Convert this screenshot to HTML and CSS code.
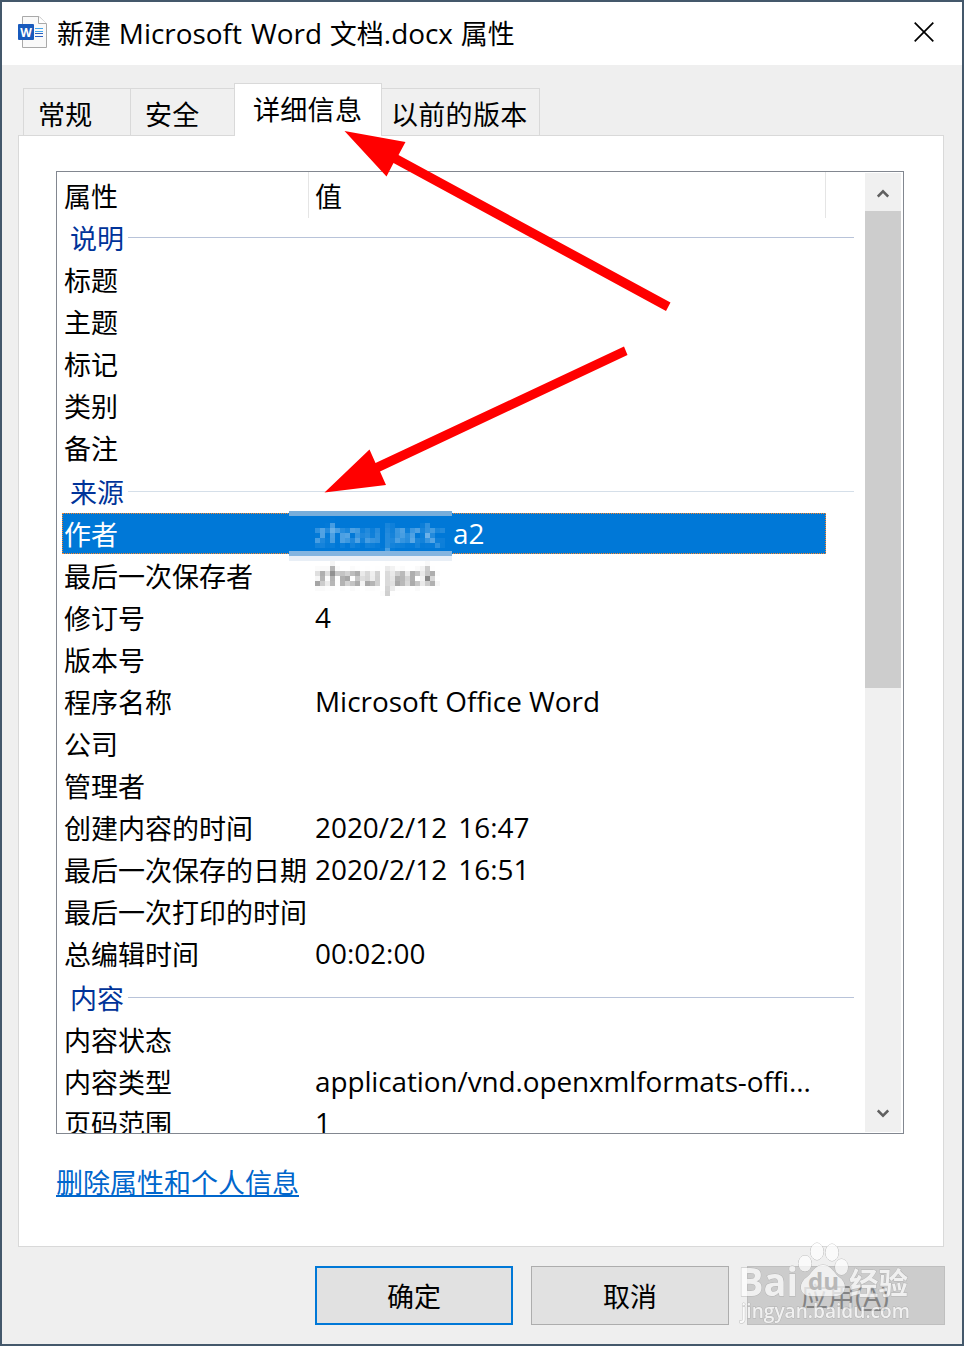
FILE: index.html
```html
<!DOCTYPE html>
<html lang="zh-CN">

<head>
  <meta charset="UTF-8">
  <meta name="viewport" content="width=device-width, initial-scale=1.0">
  <title>新建 Microsoft Word 文档.docx 属性</title>
  <link rel="stylesheet" href="styles.css">
</head>

<body>
  <div class="window">
    <header class="titlebar">
      <svg class="word-icon" width="30" height="34" viewBox="0 0 30 34">
        <path d="M4.5 .5H21L28.500 8V31.500H4.500Z" fill="#f9f9f9" stroke="#a9a9a9" />
        <path d="M20.500 .5V7.500H28.500" fill="#fff" stroke="#a9a9a9" />
        <path d="M17 12.500h8M17 15.500h8" stroke="#41a5ee" />
        <path d="M17 17.500h8M17 20.500h8" stroke="#2b5fc0" />
        <rect y="8" width="16" height="16" rx="1" fill="#185abd" />
        <text x="8" y="20.500" class="word-letter">W</text>
      </svg>
      <h1>新建 <span class="en">Microsoft Word</span> 文档<span class="en">.docx</span> 属性</h1>
      <svg class="close" width="20" height="20" viewBox="0 0 20 20">
        <path d="M.7 .7L19.300 19.300M19.300 .7L.7 19.300" stroke="#000" stroke-width="1.700" />
      </svg>
    </header>

    <nav class="tabs">
      <div class="tab general">常规</div>
      <div class="tab security">安全</div>
      <div class="tab active">详细信息</div>
      <div class="tab versions">以前的版本</div>
    </nav>

    <main class="panel">
      <div class="list">
        <div class="rows">
          <div class="row head"><span class="name">属性</span><span class="value">值</span></div>
          <div class="group">说明</div>
          <div class="row"><span class="name">标题</span></div>
          <div class="row"><span class="name">主题</span></div>
          <div class="row"><span class="name">标记</span></div>
          <div class="row"><span class="name">类别</span></div>
          <div class="row"><span class="name">备注</span></div>
          <div class="group light">来源</div>
          <div class="row selected"><span class="name">作者</span><span class="value en"><span class="mosaic">zhou jack;</span><span class="suffix">a2</span></span></div>
          <div class="row"><span class="name">最后一次保存者</span><span class="value en"><span class="mosaic">zhou jack</span></span></div>
          <div class="row"><span class="name">修订号</span><span class="value en">4</span></div>
          <div class="row"><span class="name">版本号</span></div>
          <div class="row"><span class="name">程序名称</span><span class="value en">Microsoft Office Word</span></div>
          <div class="row"><span class="name">公司</span></div>
          <div class="row"><span class="name">管理者</span></div>
          <div class="row"><span class="name">创建内容的时间</span><span class="value en date">2020/2/12 16:47</span></div>
          <div class="row"><span class="name">最后一次保存的日期</span><span class="value en date">2020/2/12 16:51</span></div>
          <div class="row"><span class="name">最后一次打印的时间</span></div>
          <div class="row"><span class="name">总编辑时间</span><span class="value en">00:02:00</span></div>
          <div class="group">内容</div>
          <div class="row"><span class="name">内容状态</span></div>
          <div class="row"><span class="name">内容类型</span><span class="value en type">application/vnd.openxmlformats-offi...</span></div>
          <div class="row last"><span class="name">页码范围</span><span class="value en">1</span></div>
        </div>
        <div class="scrollbar">
          <svg class="arrow" width="12" height="10" viewBox="0 0 12 10"><path d="M.8 7.500L6 2.300L11.200 7.500" /></svg>
          <div class="thumb"></div>
          <svg class="arrow down" width="12" height="10" viewBox="0 0 12 10"><path d="M.8 2.500L6 7.700L11.200 2.500" /></svg>
        </div>
      </div>
      <a class="remove" href="#">删除属性和个人信息</a>
    </main>

    <footer class="buttons">
      <button class="default">确定</button>
      <button>取消</button>
      <button disabled>应用<span class="en">(<u>A</u>)</span></button>
    </footer>

    <!-- annotation arrows -->
    <svg class="arrows" width="964" height="1346" viewBox="0 0 964 1346">
      <path d="M344.500 131L405.500 142L398.500 155L670.500 302.500L666 311L393.500 163L386.500 176.500Z" />
      <path d="M324.500 492.500L369.500 449.500L375.500 463L624 346.500L627.500 355L380 471.500L386 485Z" />
    </svg>

    <!-- watermark -->
    <svg class="watermark" width="180" height="90" viewBox="736 1238 180 90">
      <g class="mark">
        <text x="738" y="1296" textLength="60" lengthAdjust="spacingAndGlyphs" class="brand">Bai</text>
        <ellipse cx="805" cy="1263.500" rx="6.500" ry="8" />
        <ellipse cx="817" cy="1251.500" rx="6.500" ry="8.500" />
        <ellipse cx="832" cy="1252.500" rx="6.500" ry="8.500" />
        <ellipse cx="841.500" cy="1267" rx="6.500" ry="8" />
        <path d="M823 1265C831 1265 834 1273 839 1277C849 1284 845 1296 836 1296H811C800 1296 797 1284 807 1277C812 1273 815 1265 823 1265Z" />
        <text x="849" y="1294" textLength="59" lengthAdjust="spacingAndGlyphs" class="brand-cn">经验</text>
        <text x="741" y="1318" textLength="169" lengthAdjust="spacingAndGlyphs" class="site">jingyan.baidu.com</text>
      </g>
      <text x="808" y="1290" textLength="31" lengthAdjust="spacingAndGlyphs" class="du">du</text>
    </svg>

    <!-- pixelates the hidden names -->
    <svg class="defs" width="0" height="0">
      <filter id="pixelate" filterUnits="userSpaceOnUse" x="-5" y="0" width="145" height="45" color-interpolation-filters="sRGB">
        <feGaussianBlur stdDeviation="1.800" result="soft" />
        <feFlood x="2" y="2" width="1" height="1" flood-color="#000" />
        <feComposite x="0" y="0" width="5" height="5" operator="over" in2="none" />
        <feTile result="grid" />
        <feComposite in="soft" in2="grid" operator="in" />
        <feMorphology operator="dilate" radius="2" />
      </filter>
    </svg>
  </div>
</body>

</html>
```

FILE: styles.css
```css
* {
  box-sizing: border-box;
}

body {
  margin: 0;
  font-family: "Noto Sans CJK SC", sans-serif;
  font-size: 27px;
  line-height: 42px;
  color: #000;
}

.en {
  font-family: "Open Sans", "Noto Sans", sans-serif;
  font-size: 27.9px;
}

.window {
  position: relative;
  width: 964px;
  height: 1346px;
  border: 2px solid #44586b;
  background: #efefef;
  overflow: hidden;
}

.titlebar {
  display: flex;
  align-items: center;
  height: 63px;
  padding: 0 28px 0 16px;
  background: #fff;
}

.word-icon {
  flex: none;
  margin-bottom: 2px;
}

.word-letter {
  font: bold 12px "Open Sans", sans-serif;
  fill: #fff;
  text-anchor: middle;
}

h1 {
  margin: 0 auto 1px 9px;
  font-size: 27px;
  font-weight: normal;
  word-spacing: 1.8px;
  white-space: nowrap;
}

.close {
  margin-bottom: 3px;
}

/* tabs */
.tabs {
  display: flex;
  align-items: flex-end;
  height: 71px;
  padding-left: 21px;
}

.tab {
  height: 48px;
  padding: 4px 0 0 14px;
  border: 1px solid #d9d9d9;
  border-right: 0;
  background: #f0f0f0;
  letter-spacing: .3px;
  white-space: nowrap;
}

.general {
  width: 107px;
}

.security {
  width: 104px;
}

.tab.active {
  width: 148px;
  height: 53px;
  padding: 4px 0 0 18px;
  border-right: 1px solid #d9d9d9;
  border-bottom: 0;
  background: #fff;
  z-index: 1;
}

.versions {
  width: 158px;
  padding-left: 9px;
  border-left: 0;
  border-right: 1px solid #d9d9d9;
}

.panel {
  width: 926px;
  height: 1112px;
  margin: -1px 0 0 16px;
  padding: 35px 0 0 37px;
  border: 1px solid #d9d9d9;
  background: #fff;
}

/* property list */
.list {
  display: flex;
  justify-content: space-between;
  width: 848px;
  height: 963px;
  padding-right: 2px;
  border: 1px solid #828790;
  overflow: hidden;
}

.rows {
  width: 798px;
}

.row {
  display: flex;
  height: 42px;
  padding-left: 7px;
  line-height: 40px;
  white-space: nowrap;
}

.name {
  flex: none;
  width: 251px;
}

.value.en {
  line-height: 38px;
}

.date {
  word-spacing: 4px;
}

.type {
  letter-spacing: -.08px;
}

.head {
  width: 769px;
  height: 46px;
  margin-bottom: -2px;
  border-right: 1px solid #e5e5e5;
}

.head span {
  padding-top: 4px;
}

.head .name {
  width: 245px;
  border-right: 1px solid #e5e5e5;
}

.head .value {
  padding-left: 6px;
}

.last {
  margin-top: -1px;
}

.group {
  display: flex;
  align-items: center;
  height: 44px;
  padding: 0 0 0 13px;
  color: #003399;
}

.group::after {
  content: "";
  flex: 1;
  height: 1px;
  margin: 0 1px 2px 4px;
  background: #b8c3d9;
}

.group.light::after {
  background: #d5dfe9;
}

.selected {
  position: relative;
  width: 764px;
  height: 41px;
  margin: -1px 0 2px 5px;
  padding-left: 2px;
  outline: 1px dotted #ff8728;
  outline-offset: -1px;
  background: #0078d7;
  color: #fff;
  line-height: 42px;
}

/* smeared edges of the mosaic */
.selected::before,
.selected::after {
  content: "";
  position: absolute;
  left: 227px;
  width: 163px;
  height: 5px;
  background: #78aedb;
}

.selected::before {
  top: -2px;
}

.selected::after {
  top: 38px;
  background: #84b5e0;
  box-shadow: 0 5px #e9eff6;
}

.selected .value {
  display: flex;
  line-height: 40px;
}

.mosaic {
  display: block;
  width: 138px;
  filter: url(#pixelate);
  opacity: .65;
}

.selected .mosaic {
  opacity: .6;
}

/* scrollbar */
.scrollbar {
  display: flex;
  flex-direction: column;
  align-items: center;
  width: 36px;
  height: 959px;
  margin-top: 1px;
  background: #f0f0f0;
}

.arrow {
  margin: 16px 0 12px;
  fill: none;
  stroke: #606060;
  stroke-width: 2.5;
}

.thumb {
  width: 36px;
  height: 477px;
  background: #cdcdcd;
}

.arrow.down {
  margin: auto 0 14px;
}

.remove {
  display: inline-block;
  margin-top: 27px;
  color: #0066cc;
  text-decoration-thickness: 2px;
  text-underline-offset: 2px;
}

/* buttons */
.buttons {
  display: flex;
  gap: 18px;
  margin-top: 2px;
  padding: 17px 0 0 313px;
}

button {
  width: 198px;
  height: 59px;
  padding: 0;
  border: 1px solid #adadad;
  background: #e1e1e1;
  font: inherit;
  color: #000;
}

button.default {
  border: 2px solid #0078d7;
}

button:disabled {
  padding-right: 2px;
  border-color: #bfbfbf;
  background: #cccccc;
  color: #838383;
}

.arrows {
  position: absolute;
  top: -2px;
  left: -2px;
  z-index: 2;
  fill: #ff0000;
}

.watermark {
  position: absolute;
  top: 1236px;
  left: 734px;
}

.mark {
  fill: #fff;
  stroke: #aaa;
  stroke-width: 1px;
  paint-order: stroke;
  opacity: .72;
}

.brand {
  font: bold 40px "Open Sans", sans-serif;
}

.brand-cn {
  font: bold 30px "Noto Sans CJK SC", sans-serif;
}

.site {
  font: 600 19px "Open Sans", sans-serif;
}

.du {
  font: bold 23px "Open Sans", sans-serif;
  fill: #b8b8b8;
}

.defs {
  position: absolute;
}
```
